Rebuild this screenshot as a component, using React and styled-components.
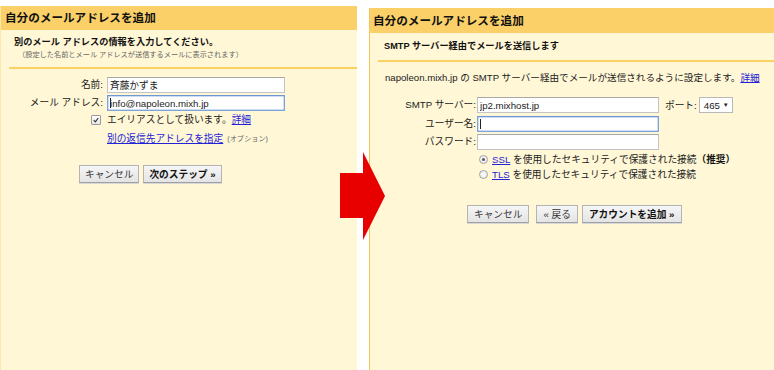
import styled, { createGlobalStyle } from 'styled-components';

const GlobalStyle = createGlobalStyle`
  html, body {
    margin: 0;
    padding: 0;
    background: #ffffff;
  }
  body {
    font-family: "Liberation Sans", Arial, "Noto Sans CJK JP", sans-serif;
    color: #222222;
  }
`;

const Page = styled.div`
  position: relative;
  width: 774px;
  height: 370px;
  display: flex;
  gap: 12px;
  overflow: hidden;
`;

const Panel = styled.div`
  display: flex;
  flex-direction: column;
  background: #fff7d6;
  margin-top: ${(p) => p.$top}px;
  width: ${(p) => (p.$width ? `${p.$width}px` : 'auto')};
  flex: ${(p) => (p.$width ? '0 0 auto' : '1 1 auto')};
  border-left: 1px solid ${(p) => p.$edge};
  box-sizing: border-box;
`;

const Header = styled.div`
  height: ${(p) => p.$h}px;
  line-height: ${(p) => p.$h}px;
  background: #fbd068;
  padding-left: ${(p) => p.$pad}px;
  font-size: 11.6px;
  font-weight: bold;
  color: #111111;
  white-space: nowrap;
`;

const Intro = styled.div`
  padding: ${(p) => p.$top}px 0 0 ${(p) => p.$pad}px;
`;

const Title = styled.div`
  font-size: 9.2px;
  font-weight: bold;
  line-height: 13px;
  color: #111111;
  white-space: nowrap;
`;

const Note = styled.div`
  font-size: 7.2px;
  line-height: 12px;
  color: #666666;
  padding-left: 4px;
  white-space: nowrap;
`;

const Divider = styled.div`
  height: 2px;
  background: #fad163;
  margin: ${(p) => p.$gap}px 0 0 8px;
`;

const Description = styled.div`
  margin-top: 9px;
  padding-left: 15px;
  font-size: 9.6px;
  line-height: 13px;
  white-space: nowrap;
`;

const Form = styled.div`
  display: grid;
  grid-template-columns: ${(p) => p.$cols};
  column-gap: ${(p) => p.$colGap}px;
  row-gap: ${(p) => p.$rowGap}px;
  align-items: center;
  margin-top: ${(p) => p.$top}px;
  font-size: 9.7px;
`;

const Label = styled.label`
  justify-self: end;
  line-height: 16px;
  white-space: nowrap;
  color: #222222;
`;

const FieldWrap = styled.div`
  position: relative;
  display: flex;
  align-items: center;
`;

const TextInput = styled.input`
  box-sizing: border-box;
  width: ${(p) => p.$w}px;
  height: 16px;
  margin: 0;
  padding: 0 2px;
  font-family: "Liberation Sans", Arial, "Noto Sans CJK JP", sans-serif;
  font-size: 9.7px;
  color: #222222;
  background: #ffffff;
  border: 1px solid ${(p) => (p.$focused ? '#7ea4de' : '#c4c4c4')};
  border-top-color: ${(p) => (p.$focused ? '#6f97d6' : '#a8a8a8')};
  box-shadow: ${(p) => (p.$focused ? 'inset 0 0 0 0.5px #9dbbe8' : 'none')};
  outline: none;
`;

const Caret = styled.span`
  position: absolute;
  left: 3px;
  top: 3px;
  width: 1px;
  height: 10px;
  background: #222222;
`;

const PortLabel = styled.span`
  white-space: nowrap;
  margin: 0 2px 0 6px;
`;

const Select = styled.div`
  box-sizing: border-box;
  width: 34px;
  height: 16px;
  display: flex;
  align-items: center;
  justify-content: space-between;
  padding: 0 3px 0 4px;
  background: #ffffff;
  border: 1px solid #b8b8b8;
  font-size: 9.7px;
`;

const SelectArrow = styled.span`
  font-size: 6px;
  color: #222222;
`;

const CheckBox = styled.span`
  justify-self: end;
  margin-right: 2px;
  width: 8px;
  height: 8px;
  border: 1px solid #9a9a9a;
  border-radius: 1px;
  background: linear-gradient(#ffffff, #e6e6e6);
  display: flex;
  align-items: center;
  justify-content: center;
`;

const Line = styled.div`
  grid-column: 2;
  display: flex;
  align-items: center;
  line-height: 13px;
  margin-top: ${(p) => p.$top || 0}px;
  padding-left: ${(p) => p.$indent || 0}px;
  white-space: nowrap;
`;

const Link = styled.a`
  color: #2323d6;
  text-decoration: underline;
  cursor: pointer;
`;

const Small = styled.span`
  font-size: 7.2px;
  color: #666666;
  margin-left: 4px;
`;

const Radio = styled.span`
  box-sizing: border-box;
  width: 9px;
  height: 9px;
  border-radius: 50%;
  border: 1px solid #a3a3a3;
  background: radial-gradient(circle, #ffffff 0%, #e3e3e3 100%);
  display: flex;
  align-items: center;
  justify-content: center;
  margin-right: 4px;
  &::after {
    content: '';
    display: ${(p) => (p.$checked ? 'block' : 'none')};
    width: 3px;
    height: 3px;
    border-radius: 50%;
    background: #555555;
  }
`;

const Strong = styled.b`
  font-weight: bold;
  color: #111111;
`;

const Buttons = styled.div`
  display: flex;
  gap: ${(p) => p.$gap}px;
  margin: ${(p) => p.$top}px 0 0 ${(p) => p.$left}px;
`;

const Button = styled.button`
  box-sizing: border-box;
  height: 18px;
  margin: 0;
  margin-left: ${(p) => p.$extra || 0}px;
  padding: 0 ${(p) => p.$pad || 6}px;
  font-family: "Liberation Sans", Arial, "Noto Sans CJK JP", sans-serif;
  font-size: 9.7px;
  font-weight: ${(p) => (p.$primary ? 'bold' : 'normal')};
  color: ${(p) => (p.$primary ? '#111111' : '#333333')};
  white-space: nowrap;
  background: linear-gradient(#f6f6f6, #e4e4e4);
  border: 1px solid #b4b4b4;
  border-bottom-color: #a0a0a0;
  box-shadow: 0 1px 0 #d8d8d8;
  cursor: pointer;
`;

const Arrow = styled.svg`
  position: absolute;
  left: 340px;
  top: 152px;
`;

function CheckMark() {
  return (
    <svg width="6" height="6" viewBox="0 0 6 6">
      <path d="M0.8 3.2 L2.4 4.8 L5.2 1" fill="none" stroke="#333" strokeWidth="1.2" />
    </svg>
  );
}

export default function App() {
  return (
    <>
      <GlobalStyle />
      <Page>
        <Panel $top={6} $width={357} $edge="#fbe7a6">
          <Header $h={24} $pad={4}>自分のメールアドレスを追加</Header>
          <Intro $top={6} $pad={13}>
            <Title>別のメール アドレスの情報を入力してください。</Title>
            <Note>（設定した名前とメール アドレスが送信するメールに表示されます）</Note>
          </Intro>
          <Divider $gap={6} />
          <Form $cols="102px 1fr" $colGap={4} $rowGap={2} $top={8}>
            <Label>名前:</Label>
            <FieldWrap>
              <TextInput $w={178} defaultValue="斉藤かずま" readOnly />
            </FieldWrap>
            <Label>メール アドレス:</Label>
            <FieldWrap>
              <TextInput $w={178} $focused defaultValue="info@napoleon.mixh.jp" readOnly />
              <Caret />
            </FieldWrap>
            <CheckBox>
              <CheckMark />
            </CheckBox>
            <Line>
              <span>エイリアスとして扱います。</span>
              <Link>詳細</Link>
            </Line>
            <Line $top={4}>
              <Link>別の返信先アドレスを指定</Link>
              <Small>(オプション)</Small>
            </Line>
          </Form>
          <Buttons $gap={4} $top={20} $left={78}>
            <Button $pad={5}>キャンセル</Button>
            <Button $pad={5} $primary>次のステップ »</Button>
          </Buttons>
        </Panel>

        <Panel $top={8} $edge="#f3c75a">
          <Header $h={25} $pad={3}>自分のメールアドレスを追加</Header>
          <Intro $top={7} $pad={14}>
            <Title>SMTP サーバー経由でメールを送信します</Title>
          </Intro>
          <Divider $gap={7} />
          <Description>
            napoleon.mixh.jp の SMTP サーバー経由でメールが送信されるように設定します。<Link>詳細</Link>
          </Description>
          <Form $cols="106px 1fr" $colGap={1} $rowGap={2.5} $top={13}>
            <Label>SMTP サーバー:</Label>
            <FieldWrap>
              <TextInput $w={182} defaultValue="jp2.mixhost.jp" readOnly />
              <PortLabel>ポート:</PortLabel>
              <Select>
                465 <SelectArrow>▼</SelectArrow>
              </Select>
            </FieldWrap>
            <Label>ユーザー名:</Label>
            <FieldWrap>
              <TextInput $w={182} $focused readOnly />
              <Caret />
            </FieldWrap>
            <Label>パスワード:</Label>
            <FieldWrap>
              <TextInput $w={182} type="password" readOnly />
            </FieldWrap>
            <Line $indent={2}>
              <Radio $checked />
              <Link>SSL</Link>
              <span>&nbsp;を使用したセキュリティで保護された接続</span>
              <Strong>（推奨）</Strong>
            </Line>
            <Line $indent={2}>
              <Radio />
              <Link>TLS</Link>
              <span>&nbsp;を使用したセキュリティで保護された接続</span>
            </Line>
          </Form>
          <Buttons $gap={4} $top={23.5} $left={97}>
            <Button>キャンセル</Button>
            <Button $extra={3}>« 戻る</Button>
            <Button $primary>アカウントを追加 »</Button>
          </Buttons>
        </Panel>

        <Arrow width="46" height="88" viewBox="0 0 46 88">
          <polygon points="0,21 23,21 23,0 45,44 23,88 23,66 0,66" fill="#e80000" />
        </Arrow>
      </Page>
    </>
  );
}
